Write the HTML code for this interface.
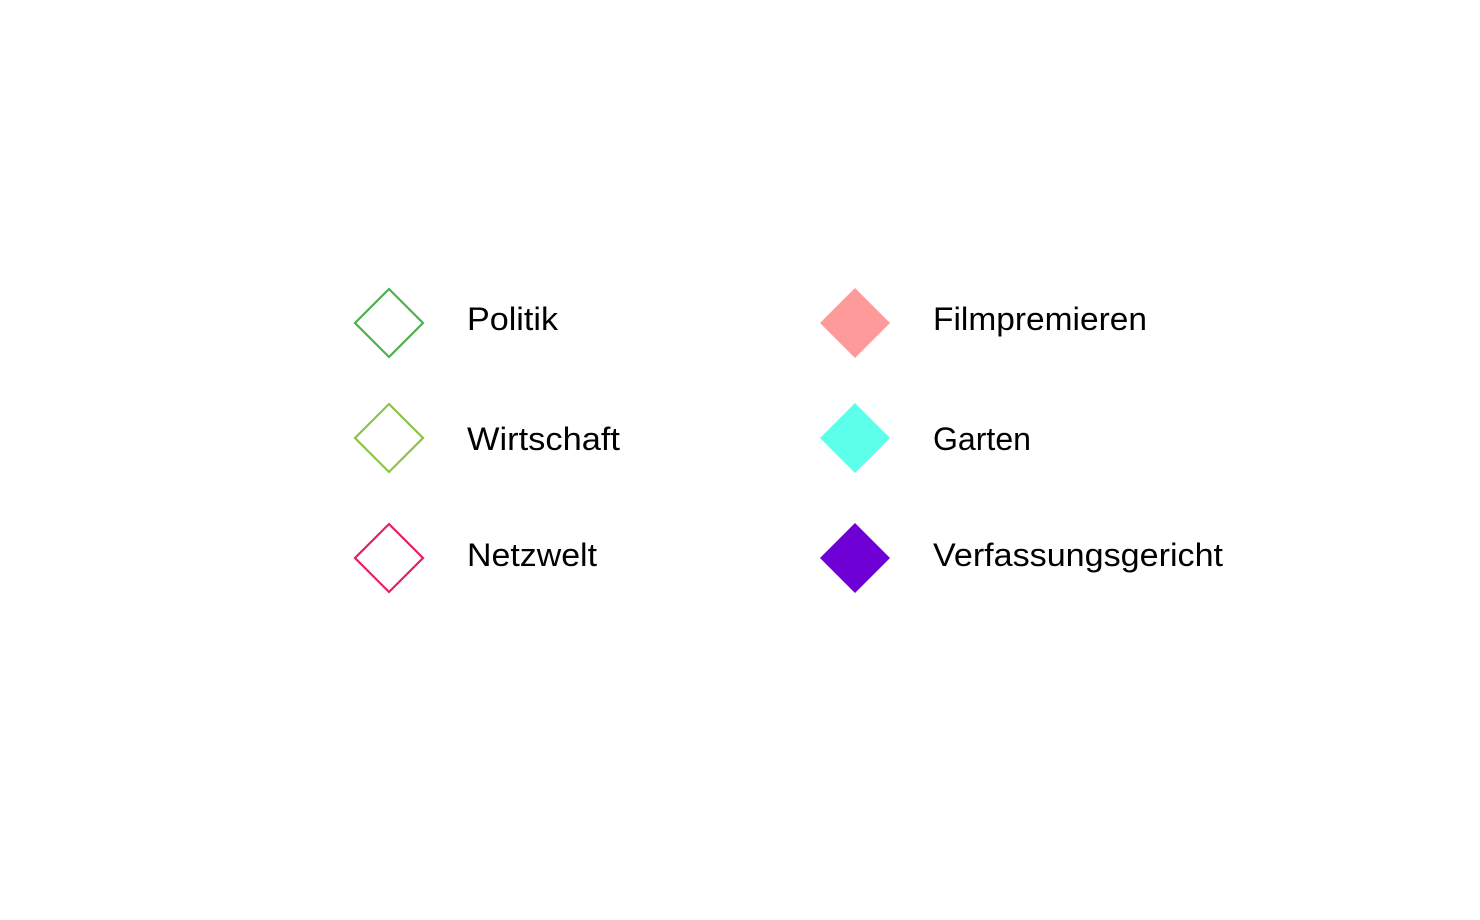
<!DOCTYPE html>
<html><head><style>html,body{margin:0;padding:0;background:#fff;width:1480px;height:920px;overflow:hidden}</style></head>
<body>
<svg width="1480" height="920" xmlns="http://www.w3.org/2000/svg" font-family="Liberation Sans, sans-serif" font-size="32" fill="#000">
<polygon points="389,289 423,323 389,357 355,323" fill="none" stroke="#4caf50" stroke-width="2.2"/>
<polygon points="389,404 423,438 389,472 355,438" fill="none" stroke="#8bc34a" stroke-width="2.2"/>
<polygon points="389,524 423,558 389,592 355,558" fill="none" stroke="#e91e63" stroke-width="2.2"/>
<polygon points="855,288 890,323 855,358 820,323" fill="#ff9a9a"/>
<polygon points="855,403 890,438 855,473 820,438" fill="#5cffe9"/>
<polygon points="855,523 890,558 855,593 820,558" fill="#6e00d6"/>
<text x="467" y="330" textLength="91" lengthAdjust="spacingAndGlyphs">Politik</text>
<text x="467" y="450" textLength="153" lengthAdjust="spacingAndGlyphs">Wirtschaft</text>
<text x="467" y="566" textLength="130" lengthAdjust="spacingAndGlyphs">Netzwelt</text>
<text x="933" y="330" textLength="214" lengthAdjust="spacingAndGlyphs">Filmpremieren</text>
<text x="933" y="450" textLength="98" lengthAdjust="spacingAndGlyphs">Garten</text>
<text x="933" y="566" textLength="290" lengthAdjust="spacingAndGlyphs">Verfassungsgericht</text>
</svg>
</body></html>
